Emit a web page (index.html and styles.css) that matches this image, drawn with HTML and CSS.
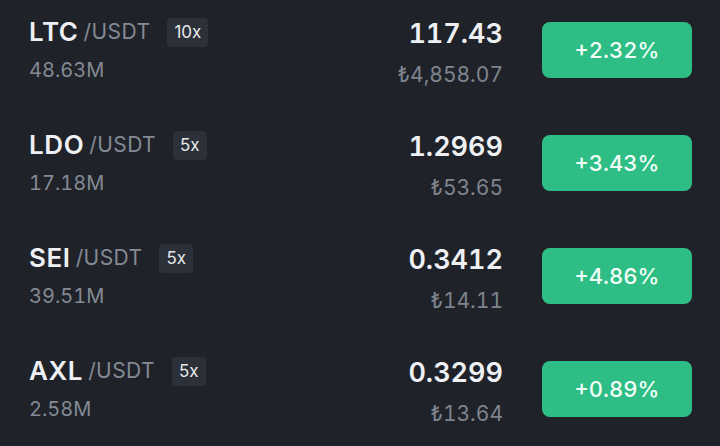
FILE: index.html
```html
<!DOCTYPE html>
<html lang="tr">
<head>
    <meta charset="UTF-8">
    <meta name="viewport" content="width=device-width, initial-scale=1.0">
    <title>Piyasalar</title>
    <link rel="stylesheet" href="styles.css">
</head>
<body>
    <div class="market-list">
        <!-- LTC -->
        <div class="market-row">
            <div class="pair">
                <div class="pair-title">
                    <span class="symbol">LTC</span>
                    <span class="quote">/USDT</span>
                    <span class="leverage">10x</span>
                </div>
                <div class="volume">48.63M</div>
            </div>
            <div class="price">
                <div class="last">117.43</div>
                <div class="local">₺4,858.07</div>
            </div>
            <div class="change">+2.32%</div>
        </div>

        <!-- LDO -->
        <div class="market-row">
            <div class="pair">
                <div class="pair-title">
                    <span class="symbol">LDO</span>
                    <span class="quote">/USDT</span>
                    <span class="leverage">5x</span>
                </div>
                <div class="volume">17.18M</div>
            </div>
            <div class="price">
                <div class="last">1.2969</div>
                <div class="local">₺53.65</div>
            </div>
            <div class="change">+3.43%</div>
        </div>

        <!-- SEI -->
        <div class="market-row">
            <div class="pair">
                <div class="pair-title">
                    <span class="symbol">SEI</span>
                    <span class="quote">/USDT</span>
                    <span class="leverage">5x</span>
                </div>
                <div class="volume">39.51M</div>
            </div>
            <div class="price">
                <div class="last">0.3412</div>
                <div class="local">₺14.11</div>
            </div>
            <div class="change">+4.86%</div>
        </div>

        <!-- AXL -->
        <div class="market-row">
            <div class="pair">
                <div class="pair-title">
                    <span class="symbol">AXL</span>
                    <span class="quote">/USDT</span>
                    <span class="leverage">5x</span>
                </div>
                <div class="volume">2.58M</div>
            </div>
            <div class="price">
                <div class="last">0.3299</div>
                <div class="local">₺13.64</div>
            </div>
            <div class="change">+0.89%</div>
        </div>
    </div>
</body>
</html>
```

FILE: styles.css
```css
/* Estilos generales */
body {
    margin: 0;
    background-color: #1f2229;
    font-family: 'Inter', 'DejaVu Sans', sans-serif;
    font-variant-numeric: tabular-nums;
    color: #eaecef;
}

.market-list {
    padding: 0 28px 0 29px;
}

/* Fila de mercado */
.market-row {
    display: flex;
    align-items: flex-start;
    height: 113px;
    padding-top: 16px;
    box-sizing: border-box;
}

.pair {
    flex: 1;
}

.pair-title {
    display: flex;
    align-items: center;
    height: 32px;
}

.symbol {
    font-size: 26px;
    font-weight: 600;
    line-height: 32px;
    color: #eef0f3;
    letter-spacing: 0.6px;
}

.quote {
    font-size: 21px;
    line-height: 32px;
    color: #848a94;
    margin-left: 5px;
    letter-spacing: 0.4px;
}

.leverage {
    margin-left: 17px;
    height: 29px;
    padding: 0 7px;
    border-radius: 4px;
    background-color: #2b3039;
    font-size: 17px;
    line-height: 29px;
    color: #e6e8ea;
    font-variant-numeric: normal;
}

.volume {
    margin-top: 10px;
    font-size: 20px;
    line-height: 24px;
    color: #848a94;
}

/* Precio */
.price {
    text-align: right;
    margin-top: 2px;
}

.last {
    font-size: 27px;
    font-weight: 600;
    line-height: 32px;
    color: #eef0f3;
}

.local {
    margin-top: 13px;
    font-size: 21px;
    line-height: 24px;
    color: #7e848d;
}

/* Boton de cambio */
.change {
    margin-left: 39px;
    margin-top: 6px;
    width: 150px;
    height: 56px;
    border-radius: 8px;
    background-color: #2ebd85;
    color: #f2fff8;
    font-size: 22px;
    font-weight: 500;
    display: flex;
    justify-content: center;
    align-items: center;
}
```
